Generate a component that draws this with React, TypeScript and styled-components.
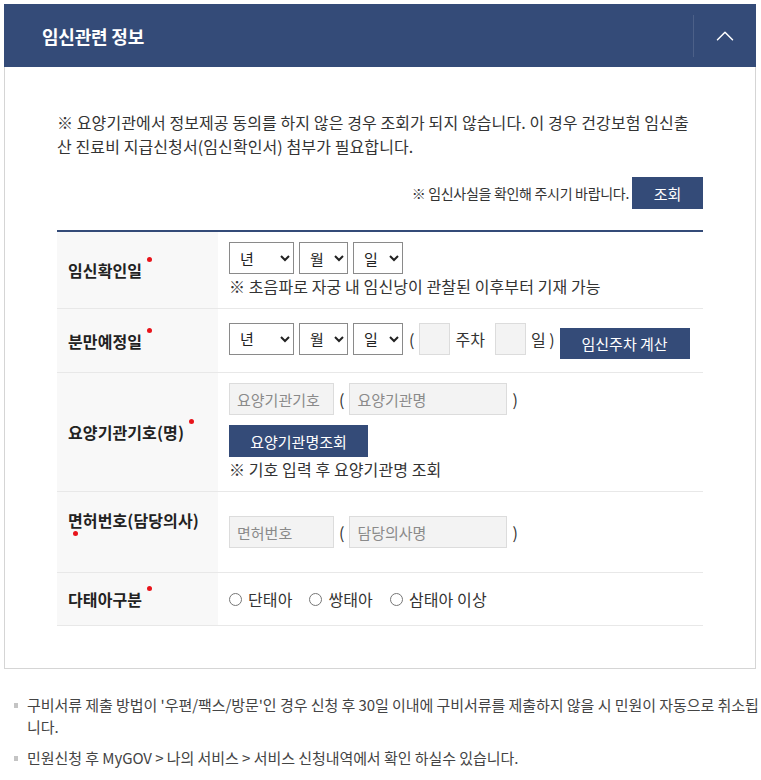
import styled, { createGlobalStyle } from "styled-components";
import { ChevronUp } from "lucide-react";

const navy = "#344b78";

const GlobalStyle = createGlobalStyle`
  body {
    margin: 0;
    background: #fff;
    font-family: "Noto Sans CJK KR", "Noto Sans", sans-serif;
    color: #333;
  }
  * { box-sizing: border-box; }
`;

const Page = styled.div`
  padding: 4px 5px 0 4px;
`;

const Header = styled.div`
  display: flex;
  align-items: center;
  height: 63px;
  background: ${navy};
  padding-left: 38px;
`;

const Title = styled.h2`
  flex: 1;
  margin: 0;
  font-size: 18px;
  font-weight: 700;
  letter-spacing: -0.2px;
  color: #fff;
`;

const Toggle = styled.button`
  display: flex;
  align-items: center;
  justify-content: center;
  width: 63px;
  height: 42px;
  padding: 0;
  border: 0;
  border-left: 1px solid rgba(255, 255, 255, 0.12);
  background: none;
  color: #fff;
`;

const Body = styled.div`
  border: 1px solid #d5d5d5;
  border-top: 0;
  padding: 43px 52px 42px;
`;

const Notice = styled.p`
  margin: 0;
  font-size: 16px;
  letter-spacing: 0.1px;
  line-height: 24px;
  color: #333;
`;

const ConfirmBar = styled.div`
  display: flex;
  justify-content: flex-end;
  align-items: center;
  gap: 3px;
  margin-top: 19px;
  font-size: 14px;
  letter-spacing: -0.3px;
  color: #333;
`;

const Button = styled.button<{ $w: number; $h?: number }>`
  width: ${(p) => p.$w}px;
  height: ${(p) => p.$h ?? 32}px;
  padding: 0;
  border: 0;
  background: ${navy};
  color: #fff;
  font-family: inherit;
  font-size: 15px;
  flex-shrink: 0;
`;

const Table = styled.div`
  margin-top: 21px;
  border-top: 2px solid ${navy};
`;

const Row = styled.div<{ $h: number }>`
  display: grid;
  grid-template-columns: 161px 1fr;
  min-height: ${(p) => p.$h + 1}px;
  border-bottom: 1px solid #e8e8e8;
`;

const Label = styled.div`
  display: flex;
  align-items: center;
  padding: 10px 18px 10px 11px;
  background: #f8f8f8;
  font-size: 16px;
  font-weight: 700;
  letter-spacing: 0.1px;
  line-height: 24px;
  color: #222;
`;

const Dot = styled.span`
  position: relative;
  display: inline-block;
  width: 10px;
  height: 24px;
  vertical-align: top;
  &::after {
    content: "";
    position: absolute;
    left: 5px;
    top: -1px;
    width: 5px;
    height: 5px;
    border-radius: 50%;
    background: #e8141b;
  }
`;

const Value = styled.div`
  display: flex;
  flex-direction: column;
  justify-content: center;
  align-items: flex-start;
  padding: 10px 11px;
`;

const Line = styled.div<{ $mt?: number }>`
  display: flex;
  align-items: flex-start;
  gap: 5px;
  margin-top: ${(p) => p.$mt ?? 0}px;
`;

const Select = styled.select<{ $w: number }>`
  width: ${(p) => p.$w}px;
  height: 32px;
  padding: 0 0 0 6px;
  border: 1px solid #8a8a8a;
  border-radius: 0;
  background: #fff;
  font-family: inherit;
  font-size: 15px;
  color: #222;
`;

const Hint = styled.div`
  font-size: 16px;
  letter-spacing: 0.1px;
  line-height: 24px;
  color: #333;
`;

const Text = styled.span<{ $ml?: number }>`
  margin-left: ${(p) => p.$ml ?? 0}px;
  font-size: 16px;
  line-height: 32px;
  color: #333;
  white-space: nowrap;
`;

const Input = styled.input<{ $w: number }>`
  width: ${(p) => p.$w}px;
  height: 32px;
  padding: 0 7px;
  border: 1px solid #dcdcdc;
  background: #f3f3f3;
  font-family: inherit;
  font-size: 15px;
  color: #333;
  &::placeholder {
    color: #8a8a8a;
  }
`;

const Radios = styled.div`
  display: flex;
  align-items: center;
  gap: 17px;
`;

const RadioLabel = styled.label`
  display: flex;
  align-items: center;
  gap: 6px;
  font-size: 16px;
  letter-spacing: 0.1px;
  line-height: 24px;
  color: #333;
  input {
    width: 13px;
    height: 13px;
    margin: 0;
  }
`;

const Notes = styled.ul`
  margin: 25px -5px 0 0;
  padding: 0 0 0 23px;
  list-style: none;
`;

const Note = styled.li`
  position: relative;
  margin-bottom: 9px;
  font-size: 15px;
  letter-spacing: -0.06px;
  line-height: 22px;
  color: #444;
  &::before {
    content: "";
    position: absolute;
    left: -13px;
    top: 9px;
    width: 4px;
    height: 5px;
    background: #c4c4c4;
  }
`;

function DateSelects() {
  return (
    <>
      <Select $w={65} defaultValue="">
        <option value="">년</option>
      </Select>
      <Select $w={49} defaultValue="">
        <option value="">월</option>
      </Select>
      <Select $w={50} defaultValue="">
        <option value="">일</option>
      </Select>
    </>
  );
}

export default function App() {
  return (
    <Page>
      <GlobalStyle />
      <Header>
        <Title>임신관련 정보</Title>
        <Toggle type="button" aria-label="접기">
          <ChevronUp size={30} strokeWidth={1.2} />
        </Toggle>
      </Header>
      <Body>
        <Notice>
          ※ 요양기관에서 정보제공 동의를 하지 않은 경우 조회가 되지 않습니다. 이 경우 건강보험 임신출산 진료비 지급신청서(임신확인서) 첨부가 필요합니다.
        </Notice>
        <ConfirmBar>
          ※ 임신사실을 확인해 주시기 바랍니다.
          <Button $w={71} type="button">조회</Button>
        </ConfirmBar>

        <Table>
          <Row $h={76}>
            <Label>
              <span>임신확인일<Dot /></span>
            </Label>
            <Value>
              <Line>
                <DateSelects />
              </Line>
              <Hint>※ 초음파로 자궁 내 임신낭이 관찰된 이후부터 기재 가능</Hint>
            </Value>
          </Row>

          <Row $h={63}>
            <Label>
              <span>분만예정일<Dot /></span>
            </Label>
            <Value>
              <Line>
                <DateSelects />
                <Text $ml={1}>(</Text>
                <Input $w={31} />
                <Text>주차</Text>
                <Input $w={31} style={{ marginLeft: 5 }} />
                <Text>일 )</Text>
                <Button $w={130} $h={31} type="button" style={{ marginTop: 5 }}>
                  임신주차 계산
                </Button>
              </Line>
            </Value>
          </Row>

          <Row $h={118}>
            <Label>
              <span>요양기관기호(명)<Dot /></span>
            </Label>
            <Value>
              <Line>
                <Input $w={105} placeholder="요양기관기호" />
                <Text>(</Text>
                <Input $w={158} placeholder="요양기관명" />
                <Text>)</Text>
              </Line>
              <Line $mt={10}>
                <Button $w={139} type="button">요양기관명조회</Button>
              </Line>
              <Hint>※ 기호 입력 후 요양기관명 조회</Hint>
            </Value>
          </Row>

          <Row $h={80}>
            <Label>
              <span>면허번호(담당의사)<Dot /></span>
            </Label>
            <Value>
              <Line>
                <Input $w={105} placeholder="면허번호" />
                <Text>(</Text>
                <Input $w={158} placeholder="담당의사명" />
                <Text>)</Text>
              </Line>
            </Value>
          </Row>

          <Row $h={52}>
            <Label>
              <span>다태아구분<Dot /></span>
            </Label>
            <Value>
              <Radios>
                <RadioLabel>
                  <input type="radio" name="multi" />
                  단태아
                </RadioLabel>
                <RadioLabel>
                  <input type="radio" name="multi" />
                  쌍태아
                </RadioLabel>
                <RadioLabel>
                  <input type="radio" name="multi" />
                  삼태아 이상
                </RadioLabel>
              </Radios>
            </Value>
          </Row>
        </Table>
      </Body>

      <Notes>
        <Note>
          구비서류 제출 방법이 '우편/팩스/방문'인 경우 신청 후 30일 이내에 구비서류를 제출하지 않을 시 민원이 자동으로 취소됩니다.
        </Note>
        <Note>민원신청 후 MyGOV &gt; 나의 서비스 &gt; 서비스 신청내역에서 확인 하실수 있습니다.</Note>
      </Notes>
    </Page>
  );
}
